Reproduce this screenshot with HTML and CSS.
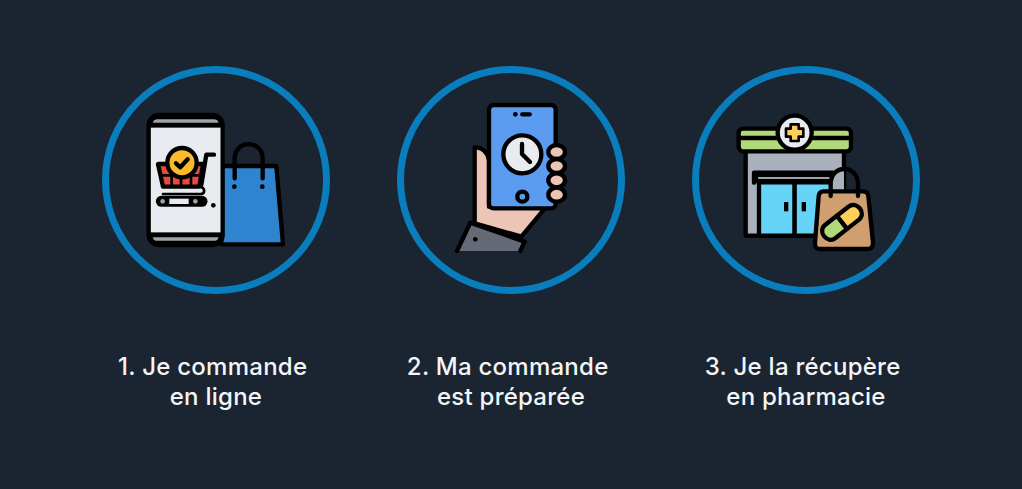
FILE: index.html
```html
<!DOCTYPE html>
<html lang="fr">
<head>
<meta charset="utf-8">
<title>Étapes</title>
<link rel="stylesheet" href="styles.css">
</head>
<body>
<main class="steps">
  <section class="step">
    <div class="ring">
      <svg class="icon" viewBox="43 39 642 642" aria-hidden="true">
        <g class="ln">
          <path class="bag-blue" d="M380 318H545L565 553H380Z"/>
          <path class="open" d="M420 355V296C420 238 504 238 504 296V355"/>
          <rect class="paper" x="162" y="165" width="222" height="390" rx="30"/>
          <path class="grey" d="M168 195V190Q168 171 190 171H356Q378 171 378 190V195Z"/>
          <path class="grey" d="M168 525V530Q168 549 190 549H356Q378 549 378 530V525Z"/>
          <path class="open" d="M165 196H380M165 524H380"/>
          <path class="red" d="M190 312H325L314 380H205Z"/>
          <path class="open thin" d="M198 346H318M231 346V378M259 346V378M289 346V378M205 380H318C332 386 332 402 318 402H205"/>
          <path class="open" d="M358 284H335L320 375"/>
          <circle class="yellow" cx="262" cy="308" r="44"/>
          <path class="open" d="M244 310L257 322L279 298"/>
          <path class="open bar" d="M200 424H322"/>
          <rect class="bar-fill" x="224" y="416" width="58" height="16"/>
          <circle class="grey dot" cx="204" cy="424" r="7"/>
          <circle class="grey dot" cx="302" cy="424" r="7"/>
        </g>
        <circle cx="356" cy="436" r="7"/>
        <circle cx="419" cy="380" r="7"/>
        <circle cx="503" cy="380" r="7"/>
      </svg>
    </div>
    <p class="label">1. Je commande&nbsp;<br>en ligne</p>
  </section>
  <section class="step">
    <div class="ring">
      <svg class="icon" viewBox="43 39 642 642" aria-hidden="true">
        <g class="ln">
          <path class="skin" d="M255 490V262C280 262 295 280 298 300V440H470L395 530Z"/>
          <path class="sleeve-fill" d="M242 488L405 545L390 573H202Z"/>
          <path class="open" d="M202 573L242 488L405 545L392 573"/>
          <rect class="phone" x="298" y="135" width="200" height="310" rx="14"/>
          <circle class="paper" cx="398" cy="283" r="57"/>
          <path class="open" d="M397 252V282L421 306"/>
          <ellipse class="skin" cx="501" cy="276" rx="25" ry="21"/>
          <ellipse class="skin" cx="501" cy="318" rx="25" ry="21"/>
          <ellipse class="skin" cx="501" cy="361" rx="25" ry="21"/>
          <ellipse class="skin" cx="501" cy="404" rx="25" ry="21"/>
          <circle class="phone" cx="398" cy="410" r="15"/>
          <path class="open" d="M398 163H420"/>
        </g>
        <circle cx="377" cy="163" r="7"/>
        <circle cx="257" cy="538" r="7"/>
      </svg>
    </div>
    <p class="label">2. Ma commande&nbsp;<br>est préparée</p>
  </section>
  <section class="step">
    <div class="ring">
      <svg class="icon" viewBox="43 39 642 642" aria-hidden="true">
        <g class="ln">
          <rect class="slate" x="183" y="272" width="295" height="255"/>
          <path class="open" d="M208 368V338H445"/>
          <rect class="mist" x="214" y="345" width="230" height="18"/>
          <rect class="glass" x="223" y="367" width="107" height="160"/>
          <rect class="glass" x="330" y="367" width="110" height="160"/>
          <rect class="lime" x="162" y="206" width="337" height="68" rx="13"/>
          <path class="open" d="M165 234H496"/>
          <circle class="paper" cx="330" cy="218" r="51"/>
          <path class="plus" d="M318 193H342V206H356V230H342V243H318V230H304V206H318Z"/>
          <path class="slate-fill" d="M438 398V372C438 345 455 332 478 330V398Z"/>
          <path class="tan" d="M415 394H535Q549 394 551 408L565 548Q565 567 548 567H405Q390 567 391 548L402 408Q404 394 415 394Z"/>
          <path class="open" d="M438 408V372C438 312 520 312 520 372V408"/>
          <g transform="rotate(-38 472 487)">
            <path class="lime" d="M472 462H428C396 462 396 512 428 512H472Z"/>
            <path class="sun" d="M472 462H516C548 462 548 512 516 512H472Z"/>
          </g>
        </g>
        <rect x="298" y="426" width="13" height="28"/>
        <rect x="351" y="426" width="13" height="28"/>
      </svg>
    </div>
    <p class="label">3. Je la récupère&nbsp;<br>en pharmacie</p>
  </section>
</main>
</body>
</html>
```
FILE: styles.css
```css
html, body {
  margin: 0;
  height: 100%;
  background: #1b2532;
}
.steps {
  display: grid;
  grid-template-columns: repeat(3, 295px);
  justify-content: center;
  padding-top: 66px;
}
.step {
  display: flex;
  flex-direction: column;
  align-items: center;
  gap: 58px;
}
.ring {
  width: 228px;
  height: 228px;
  box-sizing: border-box;
  border: 7px solid #0a7dbd;
  border-radius: 50%;
}
.icon {
  display: block;
  width: 214px;
  height: 214px;
}
.label {
  margin: 0;
  font-family: Inter, sans-serif;
  font-size: 24px;
  font-weight: 500;
  line-height: 30px;
  letter-spacing: 0.25px;
  text-align: center;
  color: #f4f5f6;
  white-space: nowrap;
}
.ln > *, .ln g > * {
  stroke: #000;
  stroke-width: 13;
  stroke-linejoin: round;
  stroke-linecap: round;
}
.open { fill: none; }
.ln > .thin { stroke-width: 8; }
.ln > .plus { stroke-width: 8; }
.ln > .bar { stroke-width: 33; }
.ln > .bar-fill, .ln > .dot, .ln > .slate-fill, .ln > .sleeve-fill { stroke: none; }
.bar-fill { fill: #e8ecf0; }
.bag-blue { fill: #2f84d0; }
.paper { fill: #e8ecf0; }
.grey { fill: #9aa3a6; }
.red { fill: #e8493f; }
.yellow { fill: #fbb92d; }
.skin { fill: #ecc5b6; }
.sleeve-fill { fill: #646b76; }
.phone { fill: #5b9bf0; }
.slate, .slate-fill { fill: #a9b1bd; }
.mist { fill: #d3d7dd; }
.glass { fill: #66d4f7; }
.lime { fill: #b0d97a; }
.plus { fill: #fdd05c; }
.tan { fill: #cf9f70; }
.sun { fill: #fdd05c; }
```
